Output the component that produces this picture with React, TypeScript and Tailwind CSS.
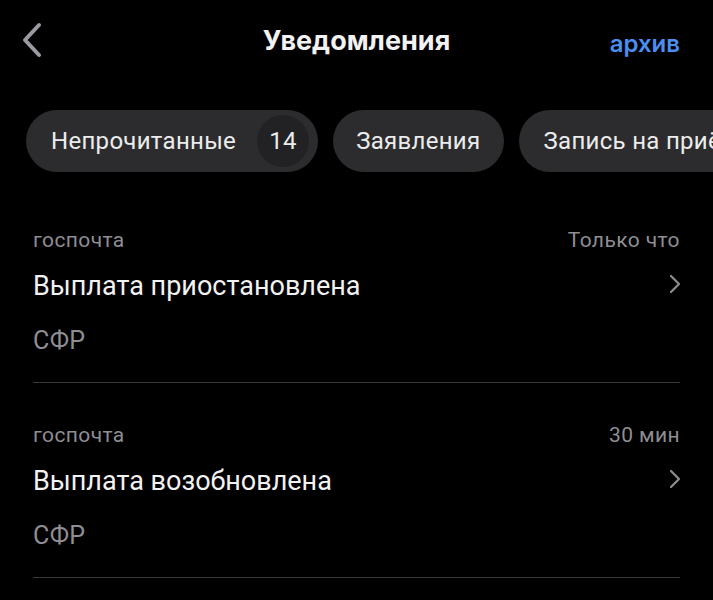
import { useState } from "react";

const items = [
  { src: "госпочта", time: "Только что", title: "Выплата приостановлена", org: "СФР" },
  { src: "госпочта", time: "30 мин", title: "Выплата возобновлена", org: "СФР" },
];

function Chevron({ left }: { left?: boolean }) {
  if (left) {
    return (
      <svg width="24" height="36" viewBox="0 0 24 36" fill="none">
        <path d="M19 3 L5 18 L19 33" stroke="#9a9aa0" strokeWidth="4" strokeLinecap="round" strokeLinejoin="round" />
      </svg>
    );
  }
  return (
    <svg width="14" height="20" viewBox="0 0 14 20" fill="none">
      <path d="M3 2 L11 10 L3 18" stroke="#8e8e93" strokeWidth="2.2" strokeLinecap="round" strokeLinejoin="round" />
    </svg>
  );
}

export default function App() {
  const [tab, setTab] = useState(0);

  return (
    <div className="w-[713px] h-[600px] bg-black overflow-hidden text-white" style={{ fontFamily: "Roboto, 'Noto Sans', sans-serif" }}>
      <div className="relative h-[84px] flex items-center justify-between pl-[20px] pr-[33px]">
        <button className="w-[24px] h-[36px] -mt-[4px]">
          <Chevron left />
        </button>
        <div className="absolute left-0 right-0 top-[21px] text-center text-[27px] font-bold text-[#f2f2f2]" style={{ fontFamily: "Inter, sans-serif" }}>
          Уведомления
        </div>
        <button className="text-[24px] font-semibold text-[#4a8ff0] mt-[4px]" style={{ fontFamily: "Inter, sans-serif" }}>
          архив
        </button>
      </div>

      <div className="flex gap-[15px] pl-[26px] mt-[26px] whitespace-nowrap">
        <button onClick={() => setTab(0)} className="h-[62px] shrink-0 flex items-center rounded-full bg-[#2c2c2e] pl-[25px] pr-[9px] text-[24px] tracking-[0.3px] text-[#ececec]">
          Непрочитанные
          <span className="ml-[21px] w-[52px] h-[52px] rounded-full bg-[#222225] flex items-center justify-center">14</span>
        </button>
        <button onClick={() => setTab(1)} className="h-[62px] shrink-0 flex items-center rounded-full bg-[#2c2c2e] px-[23px] text-[24px] tracking-[0.3px] text-[#ececec]">
          Заявления
        </button>
        <button onClick={() => setTab(2)} className="h-[62px] shrink-0 flex items-center rounded-full bg-[#2c2c2e] px-[25px] text-[24px] tracking-[0.3px] text-[#ececec]">
          Запись на приём
        </button>
      </div>

      <div className="px-[33px] mt-[16px]" data-tab={tab}>
        {items.map((it, i) => (
          <div key={i} className="box-border border-b border-[#3a3a3c] h-[195px] pt-[40px]">
            <div className="flex justify-between text-[21px] tracking-[0.4px] text-[#8e8e93] leading-[24px]">
              <span>{it.src}</span>
              <span>{it.time}</span>
            </div>
            <div className="flex justify-between items-center mt-[18px] h-[32px]">
              <span className="text-[27px] text-[#f2f2f2]">{it.title}</span>
              <span className="mr-[-2px] -mt-[4px]"><Chevron /></span>
            </div>
            <div className="mt-[24px] text-[25px] tracking-[0.4px] text-[#8e8e93] leading-[30px]">{it.org}</div>
          </div>
        ))}
      </div>
    </div>
  );
}
